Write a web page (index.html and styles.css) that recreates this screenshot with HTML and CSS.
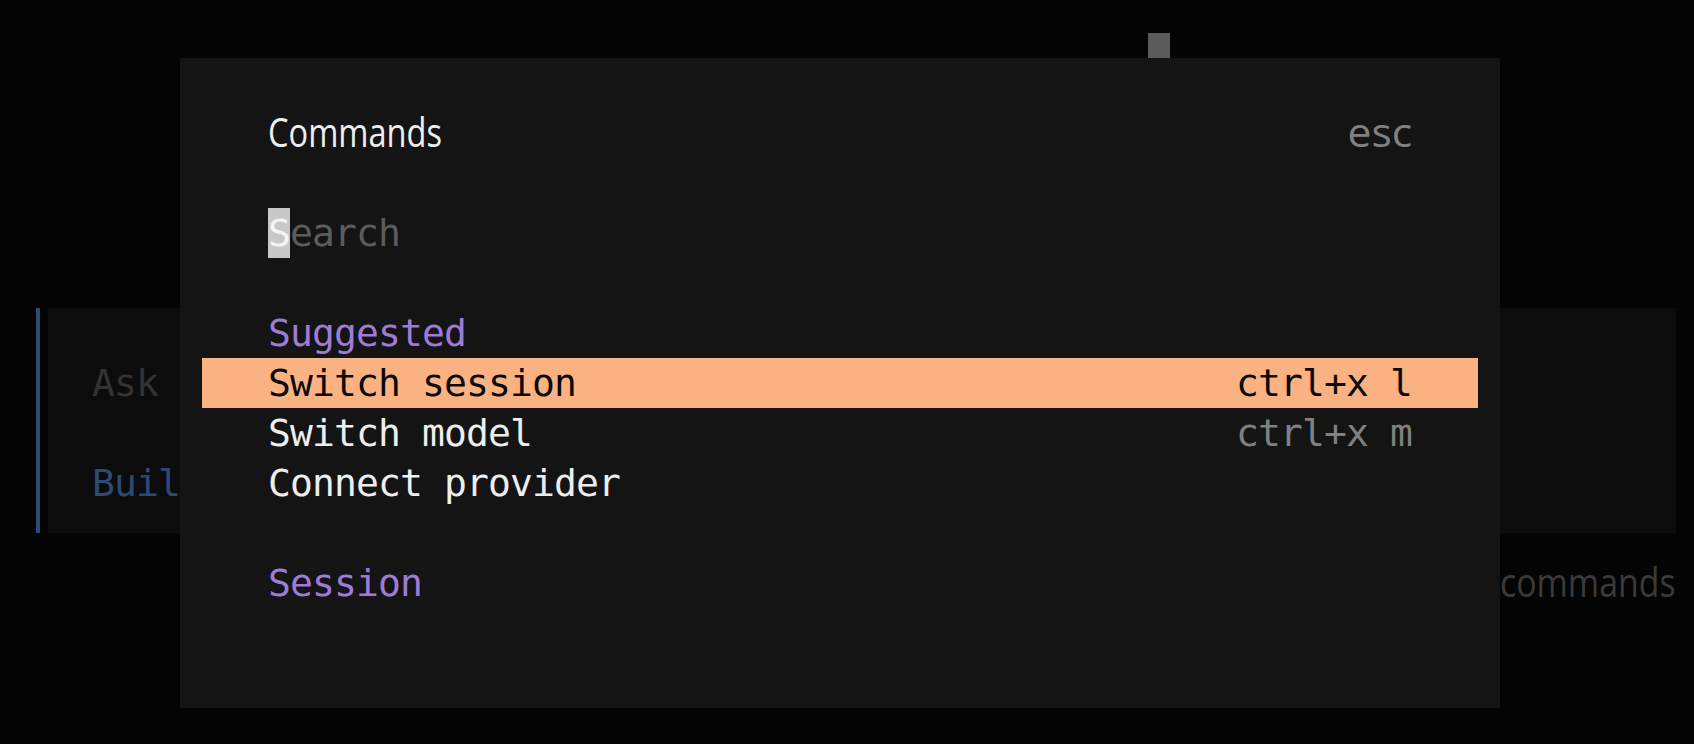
FILE: index.html
```html
<!DOCTYPE html>
<html lang="en">
<head>
<meta charset="utf-8">
<title>Commands</title>
<link rel="stylesheet" href="styles.css">
</head>
<body>
  <div class="screen">
    <div class="top-row"><span class="term-cursor"></span></div>
    <div class="prompt">
      <div class="prompt-bar"></div>
      <div class="prompt-body">
        <div class="line placeholder">Ask</div>
        <div class="line"></div>
        <div class="line agent">Build</div>
      </div>
    </div>
    <div class="hint-row">
      <span class="hint-box"><span class="prop hint-word">commands</span></span>
    </div>
  </div>

  <div class="dialog">
    <div class="dialog-header line">
      <span class="prop title">Commands</span>
      <span class="prop esc">esc</span>
    </div>
    <div class="search line"><span class="caret">S</span>earch</div>
    <div class="group">
      <div class="line group-title">Suggested</div>
      <div class="line item active"><span>Switch session</span><span class="shortcut">ctrl+x l</span></div>
      <div class="line item"><span>Switch model</span><span class="shortcut">ctrl+x m</span></div>
      <div class="line item"><span>Connect provider</span></div>
    </div>
    <div class="group">
      <div class="line group-title">Session</div>
    </div>
  </div>
</body>
</html>
```

FILE: styles.css
```css
* {
  box-sizing: border-box;
  margin: 0;
  padding: 0;
}

html, body {
  width: 1694px;
  height: 744px;
  overflow: hidden;
  background: #040404;
}

body {
  position: relative;
  font-family: "DejaVu Sans Mono", monospace;
  font-size: 38px;
  letter-spacing: -0.88px;
  line-height: 50px;
  color: #eeeeee;
}

.line {
  height: 50px;
  white-space: pre;
}

/* background terminal screen */
.screen {
  height: 744px;
  padding: 8px 18px 0 4px;
  display: flex;
  flex-direction: column;
}

.top-row {
  height: 50px;
  display: flex;
  align-items: flex-end;
  padding-left: 1144px;
}

.term-cursor {
  width: 22px;
  height: 25px;
  background: #5a5a5a;
}

.prompt {
  margin-top: 250px;
  margin-left: 22px;
  height: 225px;
  display: flex;
}

.prompt-bar {
  width: 4px;
  margin-left: 10px;
  margin-right: 8px;
  background: #2c4a74;
}

.prompt-body {
  flex: 1;
  background: #0c0c0c;
  padding: 50px 0 0 44px;
}

.placeholder {
  color: #333333;
}

.agent {
  color: #2c4a74;
}

.hint-row {
  margin-top: 25px;
  height: 50px;
  display: flex;
  justify-content: flex-end;
}

.hint-box {
  width: 176px;
}

.prop {
  display: inline-block;
  font-family: "Open Sans", "Noto Sans", sans-serif;
  font-size: 41px;
  letter-spacing: 0;
  transform-origin: left center;
}

.hint-word {
  color: #3a3a3a;
  transform: translateY(-2px) scaleX(0.825);
}

/* dialog overlay */
.dialog {
  position: absolute;
  left: 180px;
  top: 58px;
  width: 1320px;
  height: 650px;
  background: #141414;
  padding: 50px 88px 0;
}

.dialog-header {
  display: flex;
  justify-content: space-between;
}

.title {
  color: #eeeeee;
  transform: translateY(-2px) scaleX(0.795);
}

.esc {
  color: #808080;
  transform-origin: right center;
  transform: translateY(-2px) scaleX(1.04);
}

.search {
  margin-top: 50px;
  color: #5c5c5c;
}

.caret {
  display: inline-block;
  width: 22px;
  background: #c8c8c8;
  color: #f4f4f4;
}

.group {
  margin-top: 50px;
}

.group-title {
  color: #9d7cd8;
}

.item {
  display: flex;
  justify-content: space-between;
  margin: 0 -66px;
  padding: 0 66px;
}

.item.active {
  background: #fab283;
  color: #0a0a0a;
}

.shortcut {
  color: #808080;
}

.item.active .shortcut {
  color: #0a0a0a;
}
```
